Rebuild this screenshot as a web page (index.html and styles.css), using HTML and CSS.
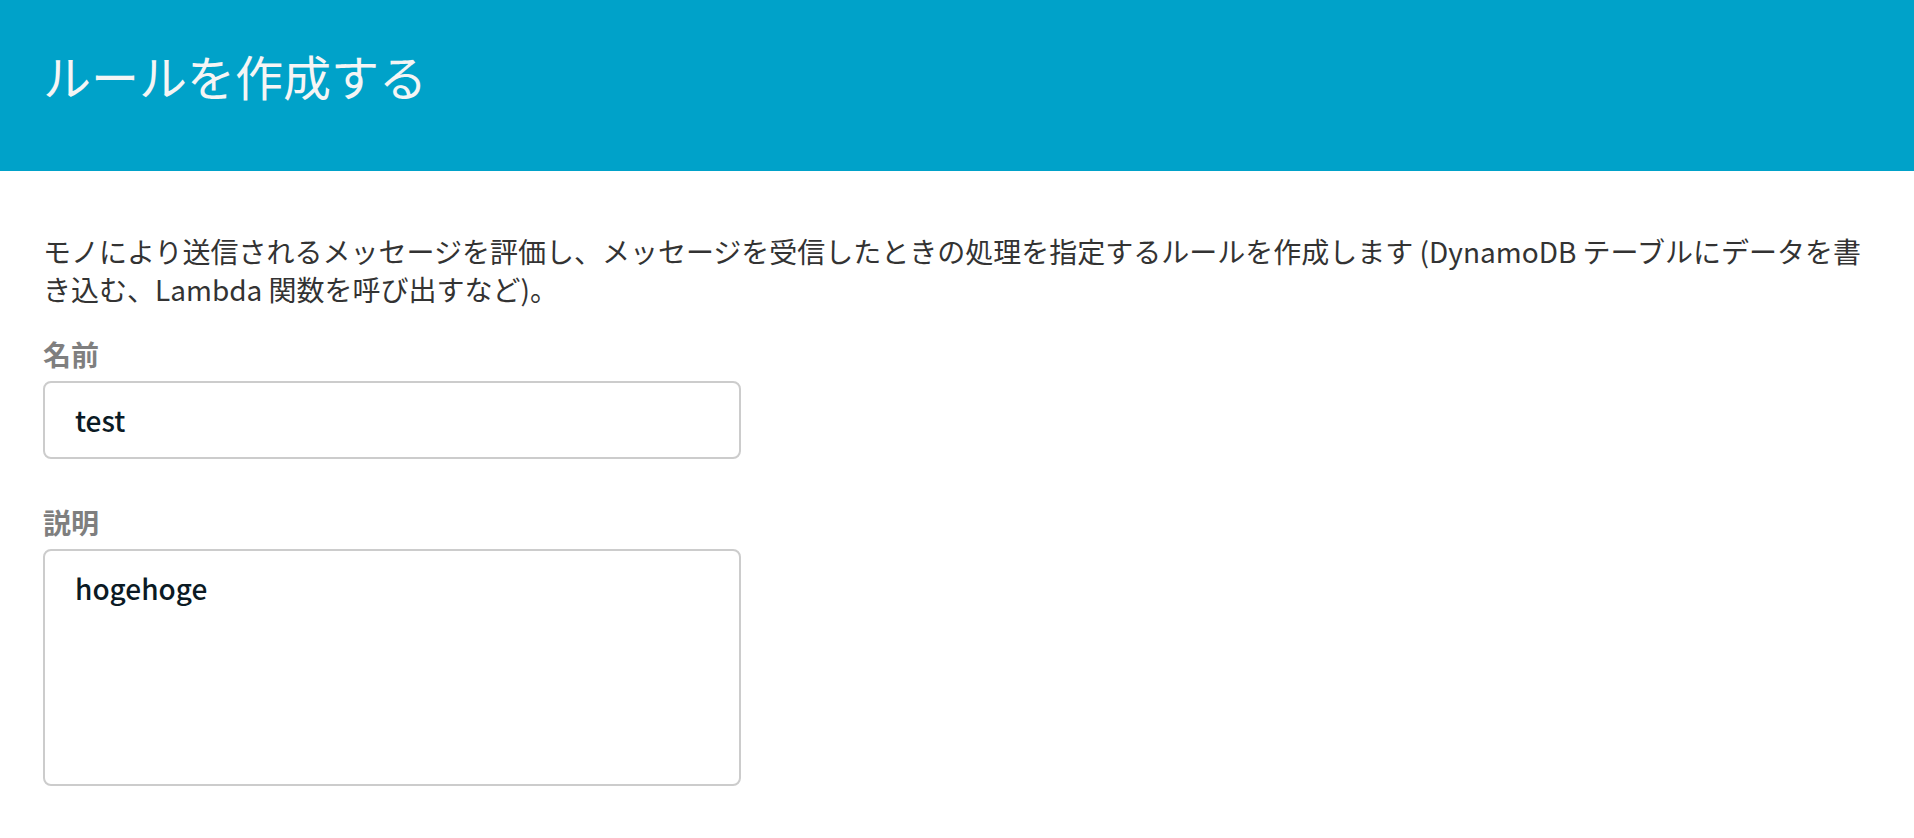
FILE: index.html
```html
<!DOCTYPE html>
<html lang="ja">
<head>
<meta charset="utf-8">
<title>ルールを作成する</title>
<link rel="stylesheet" href="styles.css">
</head>
<body>
<header class="page-header">
  <h1 class="page-title">ルールを作成する</h1>
</header>
<main class="content">
  <p class="intro">モノにより送信されるメッセージを評価し、メッセージを受信したときの処理を指定するルールを作成します (DynamoDB テーブルにデータを書き込む、Lambda 関数を呼び出すなど)。</p>
  <div class="field">
    <label class="field-label" for="rule-name">名前</label>
    <input class="text-input" id="rule-name" type="text" value="test">
  </div>
  <div class="field">
    <label class="field-label" for="rule-desc">説明</label>
    <textarea class="text-area" id="rule-desc">hogehoge</textarea>
  </div>
</main>
</body>
</html>
```

FILE: styles.css
```css
html, body {
  margin: 0;
  padding: 0;
  background: #ffffff;
}

body {
  font-family: "Noto Sans CJK JP", "Noto Sans", sans-serif;
  color: #333333;
}

.page-header {
  background: #00a2c9;
  height: 171px;
  box-sizing: border-box;
  padding: 47px 43px 0;
}

.page-title {
  margin: 0;
  font-size: 48px;
  line-height: 56px;
  font-weight: 400;
  color: #f5f5f5;
}

.content {
  padding: 61px 43px 0;
  display: flex;
  flex-direction: column;
}

.intro {
  margin: 0 0 27px;
  font-size: 28px;
  line-height: 38px;
  color: #333333;
  max-width: 1828px;
}

.field {
  display: flex;
  flex-direction: column;
  gap: 8px;
  width: 698px;
  margin-bottom: 44px;
}

.field-label {
  font-size: 28px;
  line-height: 38px;
  font-weight: 700;
  color: #7f7f7f;
}

.text-input,
.text-area {
  box-sizing: border-box;
  width: 698px;
  border: 2px solid #cccccc;
  border-radius: 8px;
  padding: 18px 30px;
  font-family: "Noto Sans CJK JP", "Noto Sans", sans-serif;
  font-size: 28px;
  line-height: 38px;
  font-weight: 500;
  color: #0b1a24;
  background: #ffffff;
  outline: none;
  margin: 0;
}

.text-input {
  height: 78px;
}

.text-area {
  height: 237px;
  resize: none;
  display: block;
}
```
